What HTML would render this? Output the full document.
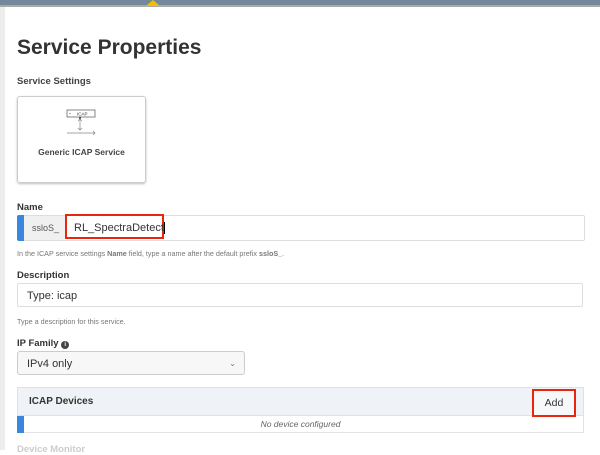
<!DOCTYPE html>
<html><head><style>
body{margin:0;width:600px;height:450px;overflow:hidden;background:#fff;font-family:"Liberation Sans",sans-serif;color:#333;position:relative}
.a{position:absolute}
</style></head><body>
<div class="a" style="left:0;top:0;width:600px;height:5px;background:#74889c"></div>
<div class="a" style="left:0;top:5px;width:600px;height:2px;background:#a9a9a9"></div>
<div class="a" style="left:146px;top:0;width:0;height:0;border-left:7px solid transparent;border-right:7px solid transparent;border-bottom:6px solid #f3c000"></div>
<div class="a" style="left:0;top:7px;width:5px;height:443px;background:#eeedeb"></div>
<div class="a" style="left:17px;top:36px;font-size:21px;font-weight:bold;color:#333">Service Properties</div>
<div class="a" style="left:17px;top:76px;font-size:9.5px;font-weight:bold;color:#444">Service Settings</div>
<div class="a" style="left:17px;top:96px;width:127px;height:85px;border:1px solid #ccc;border-radius:3px;box-shadow:0 1px 2px rgba(0,0,0,.25)"></div>
<svg class="a" style="left:66px;top:109px" width="32" height="30" viewBox="0 0 32 30">
<rect x="1" y="1" width="28" height="7" fill="none" stroke="#666" stroke-width="0.8"/>
<text x="11" y="6.5" font-size="4.5" font-family="Liberation Sans" fill="#333">ICAP</text>
<circle cx="4" cy="4.5" r=".6" fill="#666"/>
<circle cx="14" cy="9" r="1" fill="#333"/>
<path d="M14 10V21M12 12l2-2 2 2M12 19l2 2 2-2M1 24H29M27 22l2 2-2 2" fill="none" stroke="#888" stroke-width="0.7"/>
</svg>
<div class="a" style="left:17px;top:147px;width:129px;text-align:center;font-size:8.5px;font-weight:bold;color:#444">Generic ICAP Service</div>
<div class="a" style="left:17px;top:202px;font-size:9.5px;font-weight:bold;color:#333">Name</div>
<div class="a" style="left:17px;top:215px;width:566px;height:24px;border:1px solid #ddd;border-radius:2px"></div>
<div class="a" style="left:17px;top:215px;width:7px;height:26px;background:#3a87e0;border-radius:2px 0 0 2px"></div>
<div class="a" style="left:24px;top:216px;width:41px;height:24px;background:#f0f0f0;font-size:9px;line-height:24px;padding-left:8px;box-sizing:border-box;color:#555">ssloS_</div>
<div class="a" style="left:65px;top:214px;width:99px;height:25px;border:2px solid #e8250f;font-size:11px;line-height:25px;padding-left:7px;box-sizing:border-box;color:#333">RL_SpectraDetect<span style="border-left:1px solid #000;margin-left:0px"></span></div>
<div class="a" style="left:17px;top:249px;font-size:7.2px;color:#777">In the ICAP service settings <b>Name</b> field, type a name after the default prefix <b>ssloS_</b>.</div>
<div class="a" style="left:17px;top:270px;font-size:9.5px;font-weight:bold;color:#333">Description</div>
<div class="a" style="left:17px;top:283px;width:566px;height:24px;border:1px solid #ddd;border-radius:2px;font-size:11px;line-height:24px;padding-left:9px;box-sizing:border-box">Type: icap</div>
<div class="a" style="left:17px;top:317px;font-size:7.2px;color:#777">Type a description for this service.</div>
<div class="a" style="left:17px;top:338px;font-size:9.5px;font-weight:bold;color:#333">IP Family <span style="display:inline-block;width:8px;height:8px;border-radius:50%;background:#444;color:#fff;font-size:6px;line-height:8px;text-align:center;vertical-align:0">i</span></div>
<div class="a" style="left:17px;top:351px;width:228px;height:24px;border:1px solid #ccc;border-radius:3px;background:#f7f7f7;font-size:11px;line-height:24px;padding-left:9px;box-sizing:border-box">IPv4 only<span style="position:absolute;right:8px;top:0;font-size:8px;color:#777">&#8964;</span></div>
<div class="a" style="left:17px;top:387px;width:567px;height:29px;background:#eff2f7;border:1px solid #dde2ea;box-sizing:border-box"></div>
<div class="a" style="left:29px;top:396px;font-size:10px;font-weight:bold;color:#333">ICAP Devices</div>
<div class="a" style="left:532px;top:389px;width:44px;height:28px;border:2px solid #e8250f;box-sizing:border-box;font-size:10.5px;line-height:25px;text-align:center;color:#333;background:#f7f8fa">Add</div>
<div class="a" style="left:17px;top:416px;width:567px;height:17px;border:1px solid #e3e3e3;border-top:none;box-sizing:border-box;font-size:8.5px;font-style:italic;color:#666;text-align:center;line-height:16px">No device configured</div>
<div class="a" style="left:17px;top:416px;width:7px;height:17px;background:#3a87e0"></div>
<div class="a" style="left:17px;top:444px;font-size:9.5px;font-weight:bold;color:#ccc">Device Monitor</div>
</body></html>
